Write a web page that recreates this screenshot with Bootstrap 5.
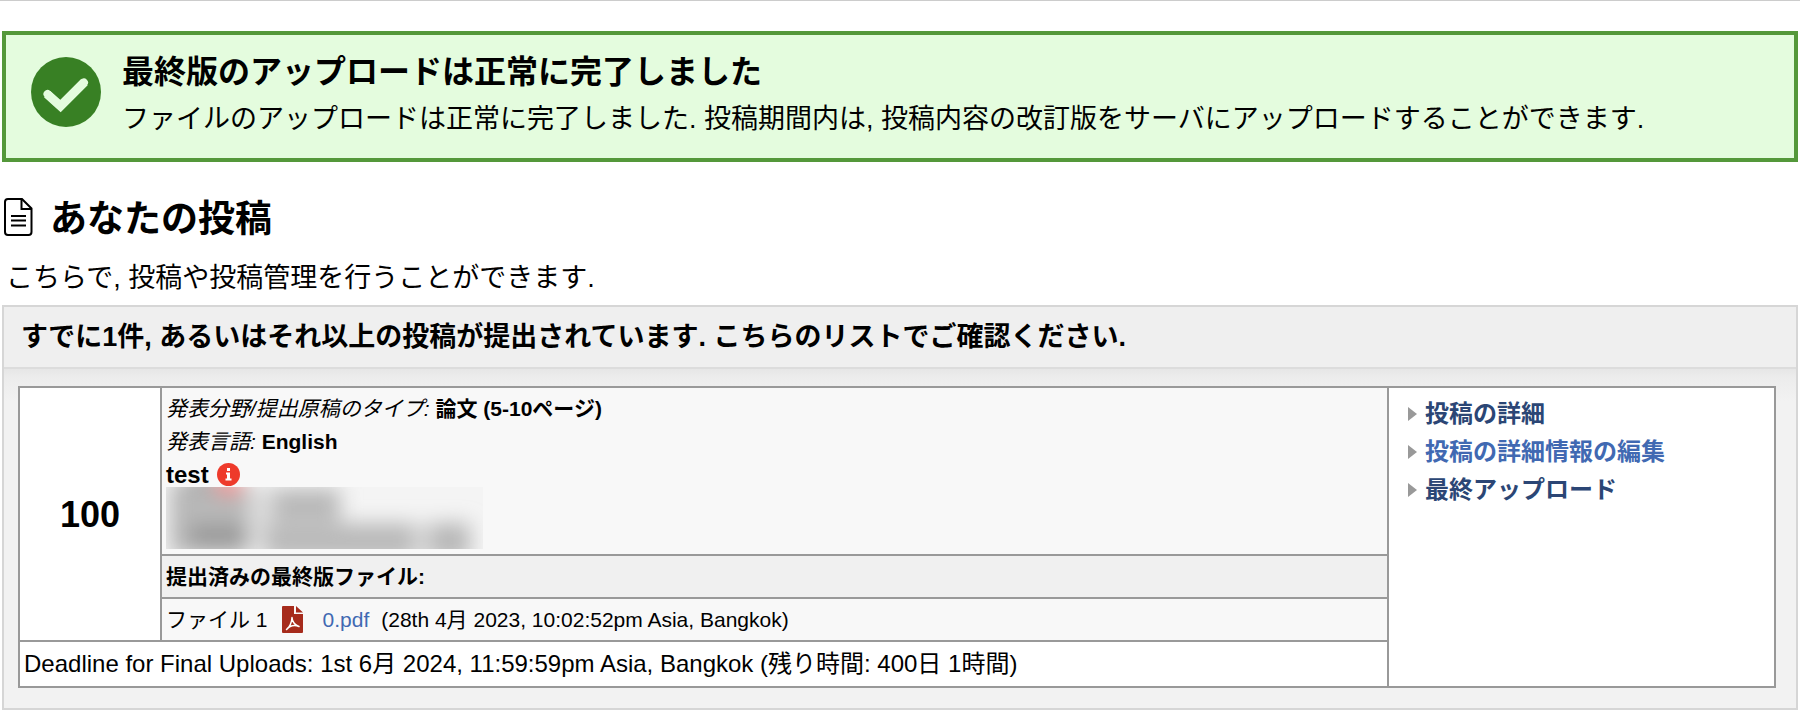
<!DOCTYPE html>
<html lang="ja">
<head>
<meta charset="utf-8">
<meta name="viewport" content="width=device-width, initial-scale=1">
<title>最終版のアップロード</title>
<link href="https://cdn.jsdelivr.net/npm/bootstrap@5.3.0/dist/css/bootstrap.min.css" rel="stylesheet">
<style>
  body { font-family: "Liberation Sans", "Noto Sans CJK JP", sans-serif; color: #000; background: #fff; border-top: 1px solid #ccc; font-size: 27px; line-height: 40px; }
  a { text-decoration: none; color: #4169b2; }
  .page { padding: 30px 2px 0; }
  .done-box { border: 4px solid #54983a; background: #e4fcde; padding: 14px 24px 19px 25px; gap: 21px; }
  .done-box svg { margin-top: 8px; }
  .done-box h1 { font-size: 32px; line-height: 47px; font-weight: 700; }
  .done-box p { margin: 3px 0 0; }
  .section-head { margin-top: 30px; gap: 17px; }
  .section-head h2 { font-size: 37px; line-height: 44px; padding-top: 6px; font-weight: 700; }
  .intro { padding: 16px 4px 7px; }
  .panel { border: 2px solid #d6d6d6; background: #f2f2f2; }
  .panel-title { font-size: 27px; line-height: 60px; font-weight: 700; background: #efefef; padding: 0 17px; }
  .panel-content { padding: 17px 20px 20px 14px; border-top: 2px solid #dcdcdc; background: linear-gradient(#e6e6e6, #ececec 8px, #f2f2f2 32px); }
  .subs { width: 100%; border-collapse: collapse; font-size: 21px; line-height: 33px; }
  .subs th, .subs td { border: 2px solid #999; padding: 4px; vertical-align: top; }
  .subs .num { width: 142px; background: #fff; font-size: 36px; text-align: center; vertical-align: middle; }
  .subs .info { background: #f8f8f8; }
  .subs .info .paper { font-size: 24px; }
  .subs .hidden-lines { margin-top: -4px; margin-bottom: 1px; }
  .subs .files-head { background: #f0f0f0; }
  .subs .file-row { background: #f8f8f8; }
  .subs .deadline { background: #fff; font-size: 24px; line-height: 36px; }
  .subs .actions { width: 387px; background: #fff; padding: 7px 19px 5px; font-size: 24px; line-height: 38px; font-weight: 700; }
  .actions a { color: #2b4675; }
  .actions a.current { color: #4169b2; }
</style>
</head>
<body>
<main class="page">
  <section class="done-box d-flex align-items-start" role="status">
    <svg class="flex-shrink-0" width="70" height="70" viewBox="0 0 70 70" aria-hidden="true">
      <circle cx="35" cy="35" r="35" fill="#388024"/>
      <path d="M16 37L29.500 49L53.500 25" fill="none" stroke="#e4fcde" stroke-width="9"/>
      <path d="M16.500 37L29.500 49L53 25.500" fill="none" stroke="#e4fcde" stroke-width="8" stroke-linecap="round"/>
    </svg>
    <div>
      <h1 class="m-0">最終版のアップロードは正常に完了しました</h1>
      <p>ファイルのアップロードは正常に完了しました. 投稿期間内は, 投稿内容の改訂版をサーバにアップロードすることができます.</p>
    </div>
  </section>

  <header class="section-head d-flex align-items-center">
    <svg width="31" height="38" viewBox="0 0 31 38" fill="none" stroke="#000" stroke-width="2" aria-hidden="true">
      <path d="M6 1H20L29.500 10.500V34Q29.500 37 26.500 37H6Q3 37 3 34V4Q3 1 6 1Z"/>
      <path d="M19.500 1V11H29.500M9 18H24M9 22.500H24M9 27.500H24"/>
    </svg>
    <h2 class="m-0">あなたの投稿</h2>
  </header>
  <p class="intro m-0">こちらで, 投稿や投稿管理を行うことができます.</p>

  <section class="panel">
    <h3 class="panel-title m-0">すでに1件, あるいはそれ以上の投稿が提出されています. こちらのリストでご確認ください.</h3>
    <div class="panel-content">
      <table class="subs">
        <tbody>
          <tr>
            <th class="num" rowspan="3" scope="rowgroup">100</th>
            <td class="info">
              <div><em>発表分野/提出原稿のタイプ:</em> <strong>論文 (5-10ページ)</strong></div>
              <div><em>発表言語:</em> <strong>English</strong></div>
              <div class="paper d-flex align-items-center"><strong>test</strong>
                <svg class="ms-2" width="23" height="23" viewBox="0 0 23 23" role="img" aria-label="情報">
                  <circle cx="11.500" cy="11.500" r="11.500" fill="#ee3a2b"/>
                  <path d="M10 5h3v3h-3zM9 9.500h4v6h1.500v2h-6v-2h1.500v-4H9z" fill="#fff"/>
                </svg>
              </div>
              <svg class="hidden-lines d-block" width="317" height="62" viewBox="0 0 317 62" aria-hidden="true">
                <defs><filter id="soft" x="-30%" y="-60%" width="160%" height="220%"><feGaussianBlur stdDeviation="10"/></filter></defs>
                <rect width="317" height="62" fill="#f4f4f4"/>
                <g filter="url(#soft)">
                  <rect x="4" y="-6" width="78" height="74" fill="#b8b8b8"/>
                  <rect x="82" y="0" width="28" height="64" fill="#dcdcdc"/>
                  <rect x="108" y="2" width="66" height="32" fill="#b8b8b8"/>
                  <rect x="100" y="36" width="148" height="36" fill="#bababa"/>
                  <rect x="248" y="36" width="18" height="36" fill="#dadada"/>
                  <rect x="264" y="36" width="40" height="36" fill="#b8b8b8"/>
                  <rect x="24" y="38" width="56" height="22" fill="#989898"/>
                  <rect x="22" y="-10" width="32" height="9" fill="#909090"/>
                  <ellipse cx="63" cy="-2" rx="14" ry="8" fill="#ff8080"/>
                </g>
              </svg>
            </td>
            <td class="actions" rowspan="4">
              <ul class="list-unstyled m-0">
                <li><a class="d-flex align-items-center gap-2" href="#"><svg width="9" height="16" viewBox="0 0 9 16" aria-hidden="true"><path d="M0 1L9 8L0 15Z" fill="#999"/></svg>投稿の詳細</a></li>
                <li><a class="current d-flex align-items-center gap-2" href="#"><svg width="9" height="16" viewBox="0 0 9 16" aria-hidden="true"><path d="M0 1L9 8L0 15Z" fill="#999"/></svg>投稿の詳細情報の編集</a></li>
                <li><a class="d-flex align-items-center gap-2" href="#"><svg width="9" height="16" viewBox="0 0 9 16" aria-hidden="true"><path d="M0 1L9 8L0 15Z" fill="#999"/></svg>最終アップロード</a></li>
              </ul>
            </td>
          </tr>
          <tr><th class="files-head" scope="col">提出済みの最終版ファイル:</th></tr>
          <tr>
            <td class="file-row">
              <div class="d-flex align-items-center">
                <span>ファイル 1</span>
                <svg width="21" height="27" viewBox="0 0 21 27" style="margin: 0 20px 0 14px" aria-hidden="true">
                  <path d="M1 0H12V8H21V26Q21 27 20 27H1Q0 27 0 26V1Q0 0 1 0ZM14 0L21 6.500H14Z" fill="#a62b1c"/>
                  <path d="M4.500 23.500C7 22 10 16.500 10 11.500C10 16 13.500 19.500 17 20.500C13 19 8 19.500 4.500 23.500Z" fill="none" stroke="#fff" stroke-width="1.500" stroke-linejoin="round"/>
                </svg>
                <a href="#">0.pdf</a>
                <span class="ms-2 ps-1">(28th 4月 2023, 10:02:52pm Asia, Bangkok)</span>
              </div>
            </td>
          </tr>
          <tr><td class="deadline" colspan="2">Deadline for Final Uploads: 1st 6月 2024, 11:59:59pm Asia, Bangkok (残り時間: 400日 1時間)</td></tr>
        </tbody>
      </table>
    </div>
  </section>
</main>
<script src="https://cdn.jsdelivr.net/npm/bootstrap@5.3.0/dist/js/bootstrap.bundle.min.js"></script>
</body>
</html>
